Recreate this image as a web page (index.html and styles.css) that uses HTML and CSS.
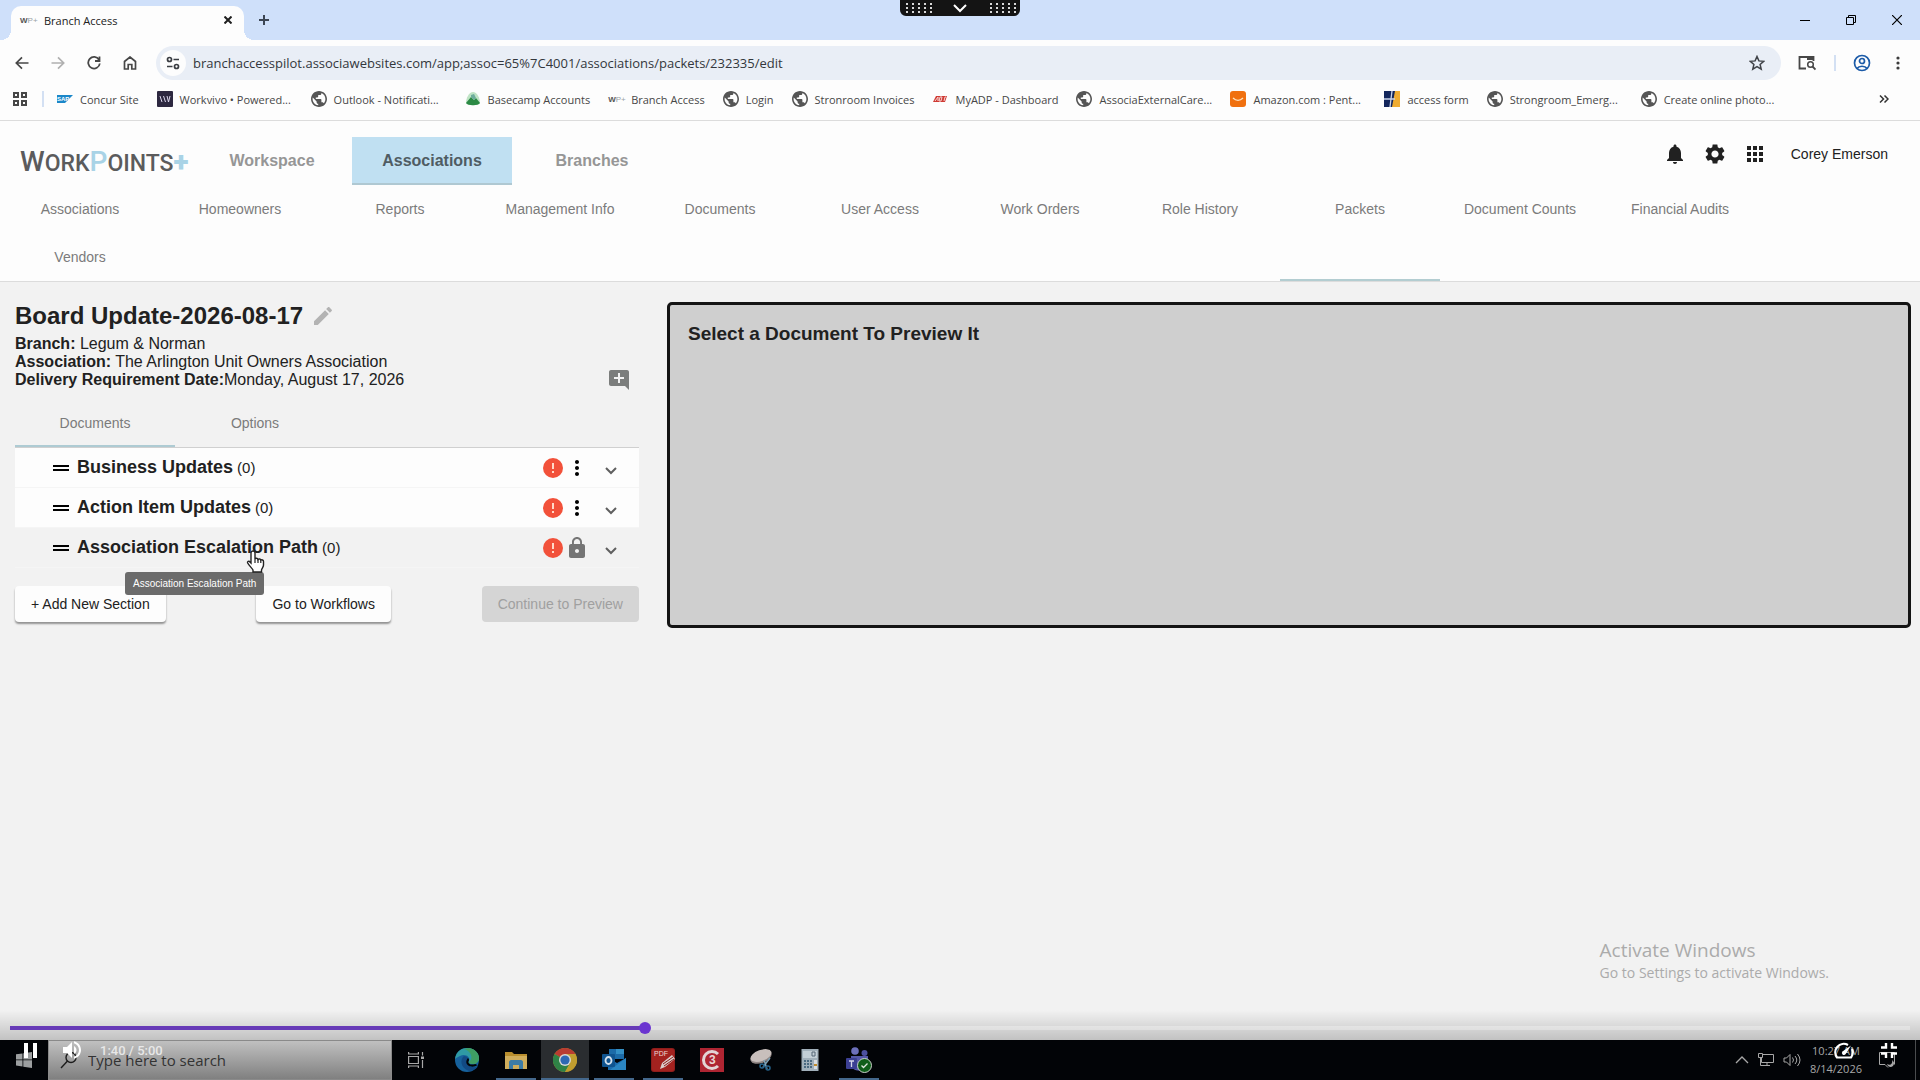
FILE: index.html
```html
<!DOCTYPE html>
<html lang="en">
<head>
    <meta charset="UTF-8">
    <meta name="viewport" content="width=device-width, initial-scale=1.0">
    <title>Branch Access</title>
    <link rel="stylesheet" href="styles.css">
</head>
<body>
    <svg class="defs" width="0" height="0" aria-hidden="true">
        <symbol id="globe" viewBox="2 2 20 20">
            <path d="M12 2C6.48 2 2 6.48 2 12s4.48 10 10 10 10-4.48 10-10S17.52 2 12 2zm-1 17.93c-3.95-.49-7-3.85-7-7.93 0-.62.08-1.21.21-1.79L9 15v1c0 1.1.9 2 2 2v1.93zm6.9-2.54c-.26-.81-1-1.39-1.9-1.39h-1v-3c0-.55-.45-1-1-1H8v-2h2c.55 0 1-.45 1-1V7h2c1.1 0 2-.9 2-2v-.41c2.93 1.19 5 4.06 5 7.41 0 2.08-.8 3.97-2.1 5.39z"/>
        </symbol>
        <symbol id="drag" viewBox="0 0 24 24">
            <path d="M20 9H4v2h16V9zM4 15h16v-2H4v2z"/>
        </symbol>
        <symbol id="error" viewBox="0 0 24 24">
            <circle cx="12" cy="12" r="10" fill="#f2513a"/>
            <path d="M11 7h2v6h-2zM11 15h2v2h-2z" fill="#ffd9c8"/>
        </symbol>
        <symbol id="more" viewBox="0 0 24 24">
            <path d="M12 8c1.1 0 2-.9 2-2s-.9-2-2-2-2 .9-2 2 .9 2 2 2zm0 2c-1.1 0-2 .9-2 2s.9 2 2 2 2-.9 2-2-.9-2-2-2zm0 6c-1.1 0-2 .9-2 2s.9 2 2 2 2-.9 2-2-.9-2-2-2z"/>
        </symbol>
        <symbol id="chevron" viewBox="0 0 12 8">
            <path d="M1 1l5 5 5-5" fill="none" stroke="#5f5f5f" stroke-width="2"/>
        </symbol>
    </svg>

    <div class="remote-bar">
        <span class="grip"></span>
        <svg width="14" height="9" viewBox="0 0 14 9"><path d="M1 1l6 6 6-6" fill="none" stroke="#fff" stroke-width="2"/></svg>
        <span class="grip"></span>
    </div>

    <div class="browser">
        <div class="tab-strip">
            <div class="browser-tab">
                <span class="wp-icon"><b>W</b>P+</span>
                <span class="tab-title">Branch Access</span>
                <button class="icon-button" aria-label="Close tab">
                    <svg width="8" height="8" viewBox="0 0 8 8"><path d="M0.500 0.500l7 7M7.500 0.500l-7 7" stroke="#1f1f1f" stroke-width="2"/></svg>
                </button>
            </div>
            <button class="icon-button" aria-label="New tab">
                <svg width="10" height="10" viewBox="0 0 10 10"><path d="M5 0v10M0 5h10" stroke="#3c4654" stroke-width="2"/></svg>
            </button>
            <div class="window-buttons">
                <button class="icon-button" aria-label="Minimize">
                    <svg width="10" height="10" viewBox="0 0 10 10"><path d="M0 5.500h10" stroke="#000"/></svg>
                </button>
                <button class="icon-button" aria-label="Restore">
                    <svg width="10" height="10" viewBox="0 0 10 10"><path d="M0.500 2.500h7v7h-7zM2.500 2.500v-2h7v7h-2" fill="none" stroke="#000"/></svg>
                </button>
                <button class="icon-button" aria-label="Close">
                    <svg width="10" height="10" viewBox="0 0 10 10"><path d="M0 0l10 10M10 0L0 10" stroke="#000" stroke-width="1.200"/></svg>
                </button>
            </div>
        </div>

        <div class="toolbar">
            <button class="icon-button" aria-label="Back">
                <svg width="14" height="14" viewBox="0 0 14 14"><path d="M13.500 7H1.500M7 1.300L1.300 7 7 12.700" fill="none" stroke="#474747" stroke-width="1.700"/></svg>
            </button>
            <button class="icon-button" aria-label="Forward">
                <svg width="14" height="14" viewBox="0 0 14 14"><path d="M0.500 7h12M7 1.300L12.700 7 7 12.700" fill="none" stroke="#b0b0b0" stroke-width="1.700"/></svg>
            </button>
            <button class="icon-button" aria-label="Reload">
                <svg width="14" height="14" viewBox="0 0 14 14"><path d="M12 3.700A5.800 5.800 0 1 0 12.800 7.500M12.500 0.500v4.500H8" fill="none" stroke="#474747" stroke-width="1.800"/></svg>
            </button>
            <button class="icon-button" aria-label="Home">
                <svg width="14" height="14" viewBox="0 0 14 14"><path d="M1.500 13V5.500L7 1l5.500 4.500V13H8.800V8.500H5.200V13z" fill="none" stroke="#474747" stroke-width="1.700"/></svg>
            </button>
            <div class="address">
                <button class="site-info" aria-label="Site information">
                    <svg width="14" height="14" viewBox="0 0 14 14" fill="none" stroke="#3a3d42" stroke-width="1.700"><circle cx="3.500" cy="3.500" r="2"/><path d="M7.500 3.500H13M1 10.500h5.500"/><circle cx="10.500" cy="10.500" r="2"/></svg>
                </button>
                <input class="url" type="text" aria-label="Address" value="branchaccesspilot.associawebsites.com/app;assoc=65%7C4001/associations/packets/232335/edit">
                <button class="icon-button" aria-label="Bookmark this page">
                    <svg width="16" height="16" viewBox="0 0 16 16"><path d="M8 1.500l1.900 4.400 4.800.4-3.600 3.100 1.100 4.700L8 11.600l-4.200 2.500 1.100-4.700L1.300 6.300l4.800-.4z" fill="none" stroke="#3f4247" stroke-width="1.500"/></svg>
                </button>
            </div>
            <button class="icon-button" aria-label="Search tabs">
                <svg width="18" height="16" viewBox="0 0 18 16"><path d="M8 13.500H1.500V2h14v4" fill="none" stroke="#474747" stroke-width="1.800"/><path d="M9 1.500h7V5H9z" fill="#474747"/><circle cx="12.500" cy="9.500" r="2.800" fill="none" stroke="#474747" stroke-width="1.500"/><path d="M14.500 11.500l3 3" stroke="#474747" stroke-width="1.800"/></svg>
            </button>
            <span class="divider"></span>
            <button class="icon-button" aria-label="Profile">
                <svg width="18" height="18" viewBox="0 0 18 18" fill="none" stroke="#1c5ba8" stroke-width="1.700"><circle cx="9" cy="9" r="7.500"/><circle cx="9" cy="7" r="2.500"/><path d="M4 14.500c2-3 8-3 10 0"/></svg>
            </button>
            <button class="icon-button" aria-label="Menu">
                <svg width="4" height="14" viewBox="0 0 4 14" fill="#3c3c3c"><circle cx="2" cy="2" r="1.600"/><circle cx="2" cy="7" r="1.600"/><circle cx="2" cy="12" r="1.600"/></svg>
            </button>
        </div>

        <div class="bookmarks">
            <button class="icon-button apps" aria-label="Apps">
                <svg width="16" height="16" viewBox="0 0 16 16" fill="none" stroke="#474747" stroke-width="2"><path d="M2 2h4v4H2zM10 2h4v4h-4zM2 10h4v4H2zM10 10h4v4h-4z"/></svg>
            </button>
            <span class="divider"></span>
            <a href="#"><svg width="16" height="16" viewBox="0 0 16 16"><path d="M0 4h16l-8 8H0z" fill="#1b87c9"/><text x="0" y="10" class="sap">SAP</text></svg>Concur Site</a>
            <a href="#" class="clipped"><svg width="16" height="16" viewBox="0 0 16 16"><rect width="16" height="16" rx="1" fill="#2d2840"/><path d="M3 5l2 6M6.500 5l2 6M10 5l1.500 6 1.500-6" fill="none" stroke="#ddd8ee"/></svg>Workvivo • Powered...</a>
            <a href="#" class="clipped"><svg class="globe" width="16" height="16"><use href="#globe"/></svg>Outlook - Notificati...</a>
            <a href="#"><svg width="16" height="16" viewBox="0 0 16 16"><path d="M1 12c0-5 3-11 7-11s7 6 7 11c0 3-14 3-14 0z" fill="#bfe3c5"/><path d="M1 12l5-6 3 3 2-2 4 5c-2 3-12 3-14 0z" fill="#2c8a45"/><path d="M6 6l3 3 2-2-2-4-3 1z" fill="#6dac9c"/></svg>Basecamp Accounts</a>
            <a href="#"><span class="wp-icon"><b>W</b>P+</span>Branch Access</a>
            <a href="#"><svg class="globe" width="16" height="16"><use href="#globe"/></svg>Login</a>
            <a href="#"><svg class="globe" width="16" height="16"><use href="#globe"/></svg>Stronroom Invoices</a>
            <a href="#"><svg width="16" height="16" viewBox="0 0 16 16"><path d="M4 5h11l-2 6H1z" fill="#cf3a34"/><path d="M3 10l3-4v4M8 6l-1 4h2l1-4zM12 10l1-4h1" fill="none" stroke="#f6d4d2"/></svg>MyADP - Dashboard</a>
            <a href="#" class="clipped"><svg class="globe" width="16" height="16"><use href="#globe"/></svg>AssociaExternalCare...</a>
            <a href="#" class="clipped"><svg width="16" height="16" viewBox="0 0 16 16"><rect width="16" height="16" rx="3" fill="#f0700f"/><path d="M3 7c3 3 7 3 10 0" fill="none" stroke="#ffe3c0" stroke-width="1.300"/></svg>Amazon.com : Pent...</a>
            <a href="#"><svg width="16" height="16" viewBox="0 0 16 16"><path d="M0 0h16v16H0z" fill="#13265c"/><path d="M11 0h5v16H8z" fill="#efac32"/><path d="M0 8h11M8 0L6 16" stroke="#c9d3ea" stroke-width="1.300"/></svg>access form</a>
            <a href="#" class="clipped"><svg class="globe" width="16" height="16"><use href="#globe"/></svg>Strongroom_Emerg...</a>
            <a href="#" class="clipped"><svg class="globe" width="16" height="16"><use href="#globe"/></svg>Create online photo...</a>
            <button class="icon-button overflow" aria-label="More bookmarks">
                <svg width="10" height="8" viewBox="0 0 10 8"><path d="M1 0.500L4.500 4 1 7.500M5.500 0.500L9 4 5.500 7.500" fill="none" stroke="#333" stroke-width="1.500"/></svg>
            </button>
        </div>
    </div>

    <header class="app-header">
        <div class="main-nav">
            <a href="#" class="logo"><span class="cap">W</span>ORK<span class="cap blue">P</span>OINTS<span class="plus">+</span></a>
            <nav class="areas">
                <a href="#">Workspace</a>
                <a href="#" class="active">Associations</a>
                <a href="#">Branches</a>
            </nav>
            <div class="user">
                <button class="icon-button" aria-label="Notifications">
                    <svg width="24" height="24" viewBox="0 0 24 24" fill="#212121"><path d="M12 22c1.100 0 2-.9 2-2h-4c0 1.100.89 2 2 2zm6-6v-5c0-3.070-1.640-5.640-4.500-6.320V4c0-.83-.67-1.500-1.500-1.500s-1.500.67-1.500 1.500v.68C7.630 5.360 6 7.920 6 11v5l-2 2v1h16v-1l-2-2z"/></svg>
                </button>
                <button class="icon-button" aria-label="Settings">
                    <svg width="24" height="24" viewBox="0 0 24 24" fill="#212121"><path d="M19.140 12.940c.04-.3.060-.61.060-.94 0-.32-.02-.64-.07-.94l2.030-1.580c.18-.14.230-.41.120-.61l-1.920-3.320c-.12-.22-.37-.29-.59-.22l-2.390.96c-.5-.38-1.030-.7-1.620-.94l-.36-2.540c-.04-.24-.24-.41-.48-.41h-3.840c-.24 0-.43.170-.47.410l-.36 2.540c-.59.240-1.130.570-1.620.940l-2.390-.96c-.22-.08-.47 0-.59.220L2.740 8.870c-.12.210-.08.470.12.610l2.030 1.580c-.05.300-.09.630-.09.940s.02.640.070.940l-2.030 1.580c-.18.140-.23.410-.12.610l1.920 3.320c.12.220.37.290.59.220l2.390-.96c.5.380 1.030.700 1.620.940l.36 2.540c.05.240.24.410.48.410h3.840c.24 0 .44-.17.470-.41l.36-2.540c.59-.24 1.130-.56 1.620-.94l2.390.96c.22.080.47 0 .59-.22l1.920-3.320c.12-.22.070-.47-.12-.61l-2.010-1.580zM12 15.600c-1.980 0-3.600-1.620-3.600-3.600s1.620-3.600 3.600-3.600 3.600 1.620 3.600 3.600-1.620 3.600-3.600 3.600z"/></svg>
                </button>
                <button class="icon-button" aria-label="Apps">
                    <svg width="24" height="24" viewBox="0 0 24 24" fill="#212121"><path d="M4 8h4V4H4v4zm6 12h4v-4h-4v4zm-6 0h4v-4H4v4zm0-6h4v-4H4v4zm6 0h4v-4h-4v4zm6-10v4h4V4h-4zm-6 4h4V4h-4v4zm6 6h4v-4h-4v4zm0 6h4v-4h-4v4z"/></svg>
                </button>
                <span class="user-name">Corey Emerson</span>
            </div>
        </div>
        <nav class="sub-nav">
            <a href="#">Associations</a>
            <a href="#">Homeowners</a>
            <a href="#">Reports</a>
            <a href="#">Management Info</a>
            <a href="#">Documents</a>
            <a href="#">User Access</a>
            <a href="#">Work Orders</a>
            <a href="#">Role History</a>
            <a href="#" class="active">Packets</a>
            <a href="#">Document Counts</a>
            <a href="#">Financial Audits</a>
            <a href="#">Vendors</a>
        </nav>
    </header>

    <main class="page">
        <section class="packet">
            <h1>Board Update-2026-08-17
                <button class="icon-button" aria-label="Edit name">
                    <svg width="24" height="24" viewBox="0 0 24 24" fill="#b3b3b3"><path d="M3 17.250V21h3.750L17.810 9.940l-3.750-3.750L3 17.250zM20.710 7.040c.39-.39.390-1.020 0-1.410l-2.340-2.340c-.39-.39-1.020-.39-1.410 0l-1.830 1.830 3.750 3.750 1.830-1.830z"/></svg>
                </button>
            </h1>
            <div class="summary">
                <div>
                    <p><b>Branch:</b> Legum &amp; Norman</p>
                    <p><b>Association:</b> The Arlington Unit Owners Association</p>
                    <p><b>Delivery Requirement Date:</b>Monday, August 17, 2026</p>
                </div>
                <button class="icon-button" aria-label="Add comment">
                    <svg width="24" height="24" viewBox="0 0 24 24" fill="#7b7d7c"><path d="M22 4c0-1.100-.9-2-2-2H4c-1.100 0-2 .9-2 2v12c0 1.100.9 2 2 2h14l4 4V4zm-5 7h-4v4h-2v-4H7V9h4V5h2v4h4v2z"/></svg>
                </button>
            </div>
            <nav class="packet-tabs">
                <a href="#" class="active">Documents</a>
                <a href="#">Options</a>
            </nav>
            <ul class="sections">
                <li>
                    <svg width="24" height="24"><use href="#drag"/></svg>
                    <span class="section-name">Business Updates</span>
                    <span class="count">(0)</span>
                    <svg class="error" width="24" height="24"><use href="#error"/></svg>
                    <button class="icon-button" aria-label="More options"><svg width="24" height="24"><use href="#more"/></svg></button>
                    <button class="icon-button expand" aria-label="Expand"><svg width="12" height="8"><use href="#chevron"/></svg></button>
                </li>
                <li>
                    <svg width="24" height="24"><use href="#drag"/></svg>
                    <span class="section-name">Action Item Updates</span>
                    <span class="count">(0)</span>
                    <svg class="error" width="24" height="24"><use href="#error"/></svg>
                    <button class="icon-button" aria-label="More options"><svg width="24" height="24"><use href="#more"/></svg></button>
                    <button class="icon-button expand" aria-label="Expand"><svg width="12" height="8"><use href="#chevron"/></svg></button>
                </li>
                <li class="hovered">
                    <svg width="24" height="24"><use href="#drag"/></svg>
                    <span class="section-name">Association Escalation Path</span>
                    <span class="count">(0)</span>
                    <svg class="error" width="24" height="24"><use href="#error"/></svg>
                    <svg width="24" height="24" viewBox="0 0 24 24" fill="#757575"><path d="M18 8h-1V6c0-2.760-2.240-5-5-5S7 3.240 7 6v2H6c-1.100 0-2 .9-2 2v10c0 1.100.9 2 2 2h12c1.100 0 2-.9 2-2V10c0-1.100-.9-2-2-2zm-6 9c-1.100 0-2-.9-2-2s.9-2 2-2 2 .9 2 2-.9 2-2 2zm3.100-9H8.900V6c0-1.710 1.390-3.100 3.100-3.100s3.100 1.390 3.100 3.100v2z"/></svg>
                    <button class="icon-button expand" aria-label="Expand"><svg width="12" height="8"><use href="#chevron"/></svg></button>
                    <span class="tooltip" role="tooltip">Association Escalation Path</span>
                    <svg class="pointer" width="20" height="24" viewBox="0 0 20 24"><path d="M7 1c1 0 2 .7 2 2v6c.5-1 2.500-1 3 .5.700-1 2.500-.7 2.800.7.900-.8 2.700-.2 2.700 1.300V15c0 2-1.500 3-2 5v2H7v-2c-1-2-4-4.500-5.300-7C1 11.500 3 10.500 4 12l1 1V3c0-1.300 1-2 2-2z" fill="#fff" stroke="#222" stroke-width="1.400"/><path d="M9 9v4M12 9.500V13M14.800 10.500V13" stroke="#222" stroke-width="1.200"/></svg>
                </li>
            </ul>
            <div class="actions">
                <button class="action">+ Add New Section</button>
                <button class="action">Go to Workflows</button>
                <button class="action" disabled>Continue to Preview</button>
            </div>
        </section>
        <section class="preview">
            <h2>Select a Document To Preview It</h2>
        </section>

        <div class="watermark">
            <p class="watermark-title">Activate Windows</p>
            <p>Go to Settings to activate Windows.</p>
        </div>
        <div class="player-shade"></div>
        <input class="seek" type="range" min="0" max="300" value="100" aria-label="Seek">
    </main>

    <footer class="taskbar">
        <button class="start" aria-label="Start">
            <svg width="16" height="16" viewBox="0 0 16 16" fill="#9c9fa0"><path d="M0 2.300l6.500-.9v6.100H0zM7.300 1.300L16 0v7.500H7.300zM0 8.300h6.500v6.200L0 13.600zM7.300 8.300H16V16l-8.700-1.300z"/></svg>
        </button>
        <label class="search">
            <svg width="18" height="18" viewBox="0 0 18 18" fill="none" stroke="#1c1c1c" stroke-width="1.400"><circle cx="11" cy="6.500" r="5"/><path d="M7.500 10L1 17"/></svg>
            <input type="text" placeholder="Type here to search" aria-label="Search">
        </label>
        <div class="task-icons">
            <button class="task" aria-label="Task View">
                <svg width="16" height="16" viewBox="0 0 16 16" fill="none" stroke="#a8a8a8" stroke-width="1.200"><path d="M0.600 4.500h9.800v7H0.600zM0.600 0v2h9.800V0M0.600 16v-2h9.800v2M14.500 0v3.500M14.500 8v8"/><path d="M13 4.500h3v2.500h-3z" fill="#a8a8a8" stroke="none"/></svg>
            </button>
            <button class="task" aria-label="Edge">
                <svg width="24" height="24" viewBox="0 0 24 24"><circle cx="12" cy="12" r="12" fill="#16619c"/><path d="M0 11C1 3 7 0 12 0c7 0 12 5 12 10 0 4-3 6-6 6-4 0-5-1.500-4-3 2-4-4-8-9-5-2 1-4 2-5 3z" fill="#2f9aa5"/><path d="M14 0c6 1 10 5 10 10 0 4-3 6-6 6-3 0-4.500-1-4.300-2C18 12 18 4 9 1z" fill="#3f9f63"/><path d="M9 8c-4 3-4 12 5 15 5 0 8-3 9-5-5 3-10 0-10-4 2-3-1-6-4-6z" fill="#124a84"/><path d="M13 10c2 2 .5 3 .3 4 0 2 3 3.500 7 2l2 1c-3 3-11 2-11-3 0-2 1-3 1.700-4z" fill="#030507"/></svg>
            </button>
            <button class="task open" aria-label="File Explorer">
                <svg width="22" height="20" viewBox="0 0 22 20"><path d="M0 2h7l2 2h13v15H0z" fill="#b88e2e"/><path d="M0 6h22v13H0z" fill="#d0ae5c"/><path d="M4 19v-7c0-1 1-2 2-2h10c1 0 2 1 2 2v7h-4v-4H8v4z" fill="#3d7ca5"/></svg>
            </button>
            <button class="task open current" aria-label="Chrome">
                <svg width="24" height="24" viewBox="0 0 24 24"><circle cx="12" cy="12" r="12" fill="#b9962a"/><path d="M12 12L1.600 6A12 12 0 0 1 22.400 6z" fill="#b93c31"/><path d="M12 12L1.600 6A12 12 0 0 0 12 24l5-9z" fill="#2f8246"/><path d="M12 6h10.400A12 12 0 0 1 12 24l5.200-9z" fill="#c09d2f"/><circle cx="12" cy="12" r="6" fill="#d8d8d8"/><circle cx="12" cy="12" r="4.600" fill="#2e68b4"/></svg>
            </button>
            <button class="task open" aria-label="Outlook">
                <svg width="24" height="24" viewBox="0 0 24 24"><path d="M7 1h15v10H7z" fill="#1c6ba8"/><path d="M14 1h8v5h-8z" fill="#3490c5"/><path d="M6 10l9 5 9-5v12H6z" fill="#196cae"/><path d="M24 10v12H8z" fill="#2b86c2"/><rect y="6" width="13" height="13" rx="1" fill="#10548f"/><ellipse cx="6.500" cy="12.500" rx="3" ry="3.500" fill="none" stroke="#d5e2ed" stroke-width="1.800"/></svg>
            </button>
            <button class="task open" aria-label="PDF Editor">
                <svg width="24" height="24" viewBox="0 0 24 24"><rect width="24" height="24" rx="3" fill="#8f1d1b"/><rect x="1" y="1" width="22" height="22" rx="2" fill="#a3221f"/><text x="3" y="8" class="pdf">PDF</text><path d="M9 21l2-6 10-8 3 4-10 8z" fill="#d9cfcc"/><path d="M12 16l10-7M13 18l10-7" stroke="#8f1d1b"/></svg>
            </button>
            <button class="task" aria-label="C3">
                <svg width="24" height="24" viewBox="0 0 24 24"><rect width="24" height="24" fill="#af2532"/><path d="M18 6a8.500 8.500 0 1 0 0 12" fill="none" stroke="#e3d5d6" stroke-width="3"/><text x="9" y="16" class="c3">3</text></svg>
            </button>
            <button class="task" aria-label="Snipping Tool">
                <svg width="24" height="24" viewBox="0 0 24 24"><ellipse cx="12" cy="9" rx="11" ry="6" transform="rotate(-20 12 9)" fill="#8f8583"/><ellipse cx="12" cy="7.500" rx="11" ry="5.500" transform="rotate(-20 12 7.500)" fill="#c8bfbc"/><path d="M21 10l-7 9M15 12l3 9" stroke="#7fa3b8" stroke-width="1.500"/><circle cx="13" cy="18" r="2" fill="none" stroke="#26648d" stroke-width="1.500"/><circle cx="19" cy="20" r="2" fill="none" stroke="#26648d" stroke-width="1.500"/></svg>
            </button>
            <button class="task" aria-label="Calculator">
                <svg width="18" height="24" viewBox="0 0 18 24"><rect x="0.500" y="1" width="17" height="22" fill="#a1b0ba"/><path d="M2 3h14v7H2z" fill="#c3cfd6"/><path d="M11 4h3v4h-3z" fill="none" stroke="#567"/><path d="M3 13h8M3 16h8M3 19h8" stroke="#4b6a80" stroke-width="2" stroke-dasharray="2 1"/><path d="M13 12h3v9h-3z" fill="#d8dde0"/><path d="M13 16h3v2h-3z" fill="#c08c2e"/></svg>
            </button>
            <button class="task open" aria-label="Teams">
                <svg width="26" height="26" viewBox="0 0 26 26"><circle cx="9" cy="4" r="3.800" fill="#6c70bb"/><circle cx="18.500" cy="6" r="3" fill="#4c50a0"/><path d="M5 9h17v10c-4 7-17 6-17-2z" fill="#5458a8"/><rect y="11" width="11" height="11" rx="1" fill="#3c4094"/><path d="M3 14h5M5.500 14v6" stroke="#d5d6ea" stroke-width="1.300"/><circle cx="18.500" cy="18.500" r="7" fill="#0f5e19" stroke="#c9cfc9"/><path d="M15.500 18.500l2 2 4-4" fill="none" stroke="#dfe8df" stroke-width="1.300"/></svg>
            </button>
        </div>
        <div class="tray">
            <svg width="14" height="8" viewBox="0 0 14 8"><path d="M1 7l6-6 6 6" fill="none" stroke="#a8a8a8" stroke-width="1.300"/></svg>
            <svg width="16" height="14" viewBox="0 0 16 14" fill="none" stroke="#a8a8a8"><path d="M5 1.500h10.500v8H3.500V5M6 12.500h6M9 10v2M0.500 0.500h4v4h-4zM2.500 4.500v8H6"/></svg>
            <svg width="18" height="14" viewBox="0 0 18 14" fill="none" stroke="#a8a8a8"><path d="M1 5h2.500L7 1.500v11L3.500 9H1zM9.500 4.500q2 2.500 0 5M12 3q3.500 4 0 8M14.500 1q5 6 0 12"/></svg>
            <div class="clock"><span>10:27 AM</span><span>8/14/2026</span></div>
            <svg width="18" height="18" viewBox="0 0 18 18" fill="none" stroke="#a8a8a8"><path d="M1.500 1.500h15v12M1.500 1.500v12H7l3 3"/><path d="M14 9c1 4-2 6-5 4 1 4 7 4 7-1 0-1-1-2-2-3z" fill="#a8a8a8" stroke="none"/></svg>
        </div>

        <div class="player-controls">
            <button class="icon-button" aria-label="Pause">
                <svg width="14" height="15" viewBox="0 0 14 15" fill="#fff"><path d="M0 0h4v15H0zM9 0h4v15H9z"/></svg>
            </button>
            <button class="icon-button" aria-label="Mute">
                <svg width="20" height="18" viewBox="3 3 18 18" fill="#fff"><path d="M3 9v6h4l5 5V4L7 9H3zm13.500 3c0-1.770-1.020-3.290-2.500-4.030v8.050c1.480-.73 2.500-2.250 2.500-4.020zM14 3.230v2.060c2.890.86 5 3.540 5 6.710s-2.110 5.850-5 6.710v2.060c4.010-.91 7-4.490 7-8.770s-2.990-7.860-7-8.770z"/></svg>
            </button>
            <span class="time">1:40 / 5:00</span>
            <button class="icon-button speed" aria-label="Playback speed">
                <svg width="20" height="17" viewBox="0 0 20 17"><path d="M14 3A8.500 8.500 0 0 0 3 15.500h14A8.500 8.500 0 0 0 18 7" fill="none" stroke="#fff" stroke-width="2.200"/><path d="M17 3.500L8.500 9.500a2 2 0 0 0 3 2.800z" fill="#fff"/></svg>
            </button>
            <button class="icon-button" aria-label="Exit full screen">
                <svg width="16" height="15" viewBox="0 0 16 15" fill="none" stroke="#fff" stroke-width="2.400"><path d="M5 0v4.500H0M11 0v4.500h5M5 15v-4.500H0M11 15v-4.500h5"/></svg>
            </button>
        </div>
    </footer>
</body>
</html>
```
FILE: styles.css
```css
* {
    box-sizing: border-box;
}

body {
    display: flex;
    flex-direction: column;
    min-height: 100vh;
    margin: 0;
    background-color: #f2f2f2;
    color: #212121;
    font-family: "Liberation Sans", Arial, sans-serif;
    font-size: 14px;
}

p, h1, h2, ul {
    margin: 0;
    padding: 0;
}

a {
    color: inherit;
    text-decoration: none;
}

button, input {
    border: 0;
    padding: 0;
    background: none;
    color: inherit;
    font: inherit;
    outline: none;
}

svg {
    flex: none;
    display: block;
}

.defs {
    position: absolute;
}

.icon-button {
    display: flex;
    align-items: center;
    justify-content: center;
    flex: none;
}

/* remote session handle */
.remote-bar {
    position: absolute;
    top: 0;
    left: 50%;
    z-index: 5;
    display: flex;
    align-items: center;
    justify-content: space-between;
    width: 120px;
    height: 16px;
    margin-left: -60px;
    padding: 0 4px;
    border-radius: 0 0 6px 6px;
    background-color: #141414;
}

.grip {
    width: 28px;
    height: 12px;
    background-image: radial-gradient(circle, #d8d8d8 1px, transparent 1px);
    background-size: 6px 4px;
}

/* browser window */
.browser {
    border-bottom: 1px solid #dcdcdc;
    background-color: #fdfdfd;
    font-family: "Open Sans", "Noto Sans", sans-serif;
    font-size: 12px;
}

.tab-strip {
    display: flex;
    align-items: center;
    height: 40px;
    padding-left: 11px;
    background-color: #cfe0fa;
}

.browser-tab {
    position: relative;
    display: flex;
    align-items: center;
    gap: 8px;
    width: 233px;
    height: 34px;
    margin: 6px 15px 0 0;
    padding: 0 12px 6px 9px;
    border-radius: 10px 10px 0 0;
    background-color: #fdfdfd;
    font-size: 11px;
}

.browser-tab::before, .browser-tab::after {
    content: "";
    position: absolute;
    bottom: 0;
    width: 10px;
    height: 10px;
}

.browser-tab::before {
    left: -10px;
    background: radial-gradient(circle at 0 0, transparent 10px, #fdfdfd 10px);
}

.browser-tab::after {
    right: -10px;
    background: radial-gradient(circle at 100% 0, transparent 10px, #fdfdfd 10px);
}

.tab-title {
    flex: 1;
}

.wp-icon {
    width: 16px;
    color: #9aa2a6;
    font-family: "Liberation Sans", Arial, sans-serif;
    font-size: 8px;
}

.wp-icon b {
    color: #555;
}

.window-buttons {
    display: flex;
    margin-left: auto;
}

.window-buttons .icon-button {
    width: 46px;
    height: 40px;
}

.toolbar {
    display: flex;
    align-items: center;
    height: 40px;
    padding: 6px 4px 0 4px;
}

.toolbar > .icon-button {
    width: 36px;
    height: 34px;
}

.toolbar > .divider {
    margin: 0 8px 0 9px;
}

.address {
    display: flex;
    align-items: center;
    flex: 1;
    height: 34px;
    margin: 0 8px;
    padding: 0 16px 0 4px;
    border-radius: 17px;
    background-color: #e9eef6;
    color: #33373c;
    font-size: 13px;
}

.site-info {
    display: flex;
    align-items: center;
    justify-content: center;
    width: 26px;
    height: 26px;
    border-radius: 50%;
    background-color: #fdfdfd;
}

.url {
    flex: 1;
    margin-left: 7px;
}

.divider {
    width: 2px;
    height: 16px;
    background-color: #d3e0f3;
}

.bookmarks {
    display: flex;
    align-items: center;
    gap: 18px;
    height: 40px;
    padding: 0 31px 2px 12px;
    color: #474747;
    font-size: 11px;
    white-space: nowrap;
}

.bookmarks .divider {
    margin: 0 -5px 0 -4px;
}

.bookmarks a {
    display: flex;
    align-items: center;
    gap: 7px;
}

.bookmarks .clipped {
    width: 136px;
}

.bookmarks .overflow {
    margin-left: auto;
}

.globe {
    fill: #555;
}

.sap {
    fill: #fff;
    font-family: "Liberation Sans", Arial, sans-serif;
    font-size: 6px;
    font-weight: bold;
}

/* application header */
.app-header {
    border-bottom: 1px solid #dcdcdc;
    background-color: #fdfdfd;
}

.main-nav {
    display: flex;
    height: 64px;
    padding: 16px 32px 0 20px;
}

.logo {
    display: flex;
    align-items: baseline;
    width: 172px;
    color: #5b5b5c;
    font-family: Roboto, sans-serif;
    font-size: 23px;
    font-weight: 500;
    line-height: 50px;
}

.cap {
    font-size: 28px;
}

.blue, .plus {
    color: #a9d3e6;
}

.plus {
    font-size: 28px;
    font-weight: 900;
}

.areas {
    display: flex;
    color: #969696;
    font-size: 16px;
    font-weight: bold;
}

.areas a {
    width: 160px;
    line-height: 48px;
    text-align: center;
}

.areas .active {
    border-bottom: 2px solid #afc8d2;
    background-color: #c0e0f2;
    color: #4f5c63;
}

.user {
    display: flex;
    align-items: center;
    gap: 16px;
    height: 34px;
    margin-left: auto;
}

.user-name {
    margin-left: 8px;
}

.sub-nav {
    display: flex;
    flex-wrap: wrap;
    padding-right: 16px;
    color: #7b7b7b;
}

.sub-nav a {
    width: 160px;
    line-height: 48px;
    text-align: center;
}

.sub-nav .active {
    height: 96px;
    margin-bottom: -48px;
    border-bottom: 2px solid #b3cdd1;
}

/* packet page */
.page {
    position: relative;
    display: flex;
    align-items: flex-start;
    flex: 1;
    padding-top: 20px;
}

.packet {
    width: calc(100% / 3);
    padding: 0 1px 0 15px;
}

h1 {
    display: flex;
    align-items: center;
    gap: 8px;
    font-size: 24px;
    line-height: 28px;
}

.summary {
    display: flex;
    align-items: flex-end;
    justify-content: space-between;
    margin-top: 5px;
    padding-right: 8px;
    font-size: 16px;
    line-height: 18px;
}

.summary > div {
    height: 57px;
}

.packet-tabs {
    display: flex;
    margin-top: 7px;
    border-bottom: 1px solid #d0d0d0;
    color: #7b7b7b;
}

.packet-tabs a {
    width: 160px;
    line-height: 48px;
    text-align: center;
}

.packet-tabs .active {
    height: 48px;
    border-bottom: 2px solid #aecbd3;
}

.sections {
    list-style: none;
}

.sections li {
    position: relative;
    display: flex;
    align-items: center;
    height: 40px;
    padding: 0 16px 0 34px;
    border-bottom: 1px solid #f5f5f5;
    background-color: #fdfdfd;
}

.sections .hovered {
    background-color: #f2f2f2;
}

.section-name {
    margin-left: 4px;
    font-size: 18px;
    font-weight: bold;
}

.count {
    margin-left: 4px;
    font-size: 15px;
}

.error {
    margin-left: auto;
}

.expand {
    width: 24px;
    height: 24px;
    margin-left: 10px;
    padding-top: 6px;
}

.tooltip {
    position: absolute;
    top: 44px;
    left: 110px;
    z-index: 1;
    padding: 6px 8px;
    border-radius: 3px;
    background-color: #6b6b6b;
    color: #fff;
    font-size: 10px;
    line-height: 11px;
}

.pointer {
    position: absolute;
    top: 22px;
    left: 231px;
    z-index: 2;
}

.actions {
    display: flex;
    justify-content: space-between;
    margin-top: 18px;
}

.action {
    height: 36px;
    padding: 0 16px;
    border-radius: 4px;
    background-color: #fdfdfd;
    box-shadow: 0 2px 2px rgba(0, 0, 0, 0.4);
}

.action:disabled {
    background-color: #d5d5d5;
    box-shadow: none;
    color: #a0a0a0;
}

.preview {
    flex: 1;
    min-height: 326px;
    margin: 0 9px 0 27px;
    padding: 18px;
    border: 3px solid #141414;
    border-radius: 5px;
    background-color: #cfcfcf;
}

h2 {
    font-size: 19px;
    line-height: 22px;
}

.watermark {
    position: absolute;
    right: 91px;
    bottom: 57px;
    color: #ababab;
    font-family: "Open Sans", "Noto Sans", sans-serif;
    font-size: 14px;
    line-height: 20px;
}

.watermark-title {
    font-size: 19px;
    line-height: 26px;
}

/* video player overlay */
.player-shade {
    position: absolute;
    right: 0;
    bottom: 0;
    left: 0;
    height: 30px;
    background-image: linear-gradient(transparent, rgba(0, 0, 0, 0.2));
}

.seek {
    position: absolute;
    right: 10px;
    bottom: 6px;
    left: 10px;
    height: 12px;
    margin: 0;
    appearance: none;
}

.seek::-webkit-slider-runnable-track {
    height: 4px;
    background: linear-gradient(to right, #673ab7 33.4%, rgba(255, 255, 255, 0.3) 33.4%);
}

.seek::-webkit-slider-thumb {
    width: 12px;
    height: 12px;
    margin-top: -4px;
    border-radius: 50%;
    background-color: #6b35d0;
    appearance: none;
}

.player-controls {
    position: absolute;
    top: 0;
    right: 0;
    left: 0;
    display: flex;
    align-items: center;
    height: 20px;
    padding: 0 23px 0 24px;
}

.player-controls .icon-button + .icon-button {
    margin-left: 24px;
}

.player-controls .time {
    flex: 1;
    margin-left: 18px;
    color: #e8e8e8;
    font-family: Roboto, sans-serif;
    font-size: 13px;
    font-weight: 500;
}

.player-controls .speed {
    margin-right: 3px;
}

/* taskbar */
.taskbar {
    position: relative;
    display: flex;
    height: 40px;
    background-color: #020407;
    font-family: "Open Sans", "Noto Sans", sans-serif;
}

.start {
    display: flex;
    align-items: center;
    justify-content: center;
    width: 48px;
}

.search {
    display: flex;
    align-items: center;
    gap: 10px;
    width: 344px;
    padding-left: 11px;
    border: 1px solid #8a8a8a;
    background-image: linear-gradient(#c0c0c0, #808080);
}

.search input {
    flex: 1;
    font-size: 15px;
}

.search input::placeholder {
    color: #333;
    opacity: 1;
}

.task-icons {
    display: flex;
    gap: 1px;
}

.task {
    display: flex;
    align-items: center;
    justify-content: center;
    width: 48px;
    height: 40px;
}

.task:first-child {
    margin-right: 2px;
}

.task.open {
    background: linear-gradient(#44688c, #44688c) center bottom / 40px 2px no-repeat;
}

.task.current {
    background-color: #2a2d30;
    background-size: 48px 2px;
}

.pdf, .c3 {
    font-family: "Liberation Sans", Arial, sans-serif;
    font-size: 7px;
    fill: #ead7d5;
}

.c3 {
    font-size: 12px;
    font-weight: bold;
}

.tray {
    display: flex;
    align-items: center;
    gap: 9px;
    margin: 0 4px 0 auto;
    padding-right: 19px;
    border-right: 1px solid #4a4c4e;
    color: #a8a8a8;
}

.clock {
    display: flex;
    flex-direction: column;
    align-items: center;
    margin-right: 7px;
    font-size: 11px;
    line-height: 18px;
}
```
